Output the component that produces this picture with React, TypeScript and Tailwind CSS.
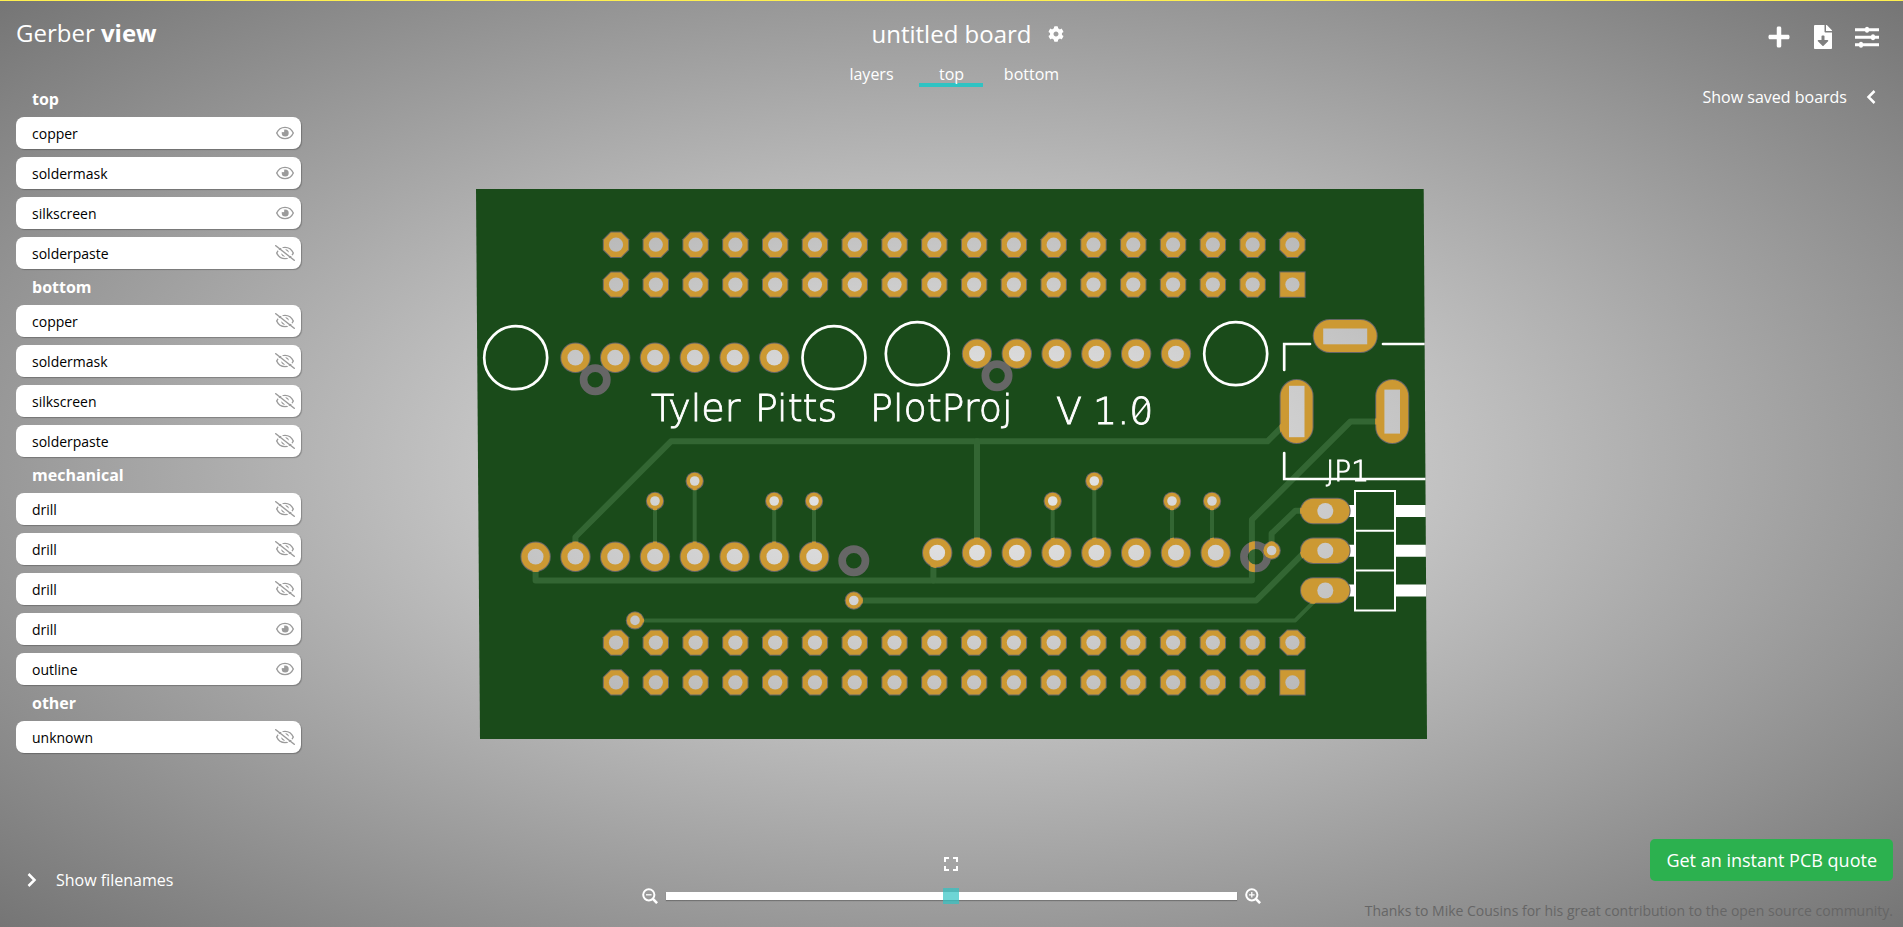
import { useState } from "react";
import { FaCog, FaFileDownload, FaPlus } from "react-icons/fa";

type Layer = { name: string; visible: boolean };
type LayerGroup = { title: string; layers: Layer[] };

const initialGroups: LayerGroup[] = [
  {
    title: "top",
    layers: [
      { name: "copper", visible: true },
      { name: "soldermask", visible: true },
      { name: "silkscreen", visible: true },
      { name: "solderpaste", visible: false },
    ],
  },
  {
    title: "bottom",
    layers: [
      { name: "copper", visible: false },
      { name: "soldermask", visible: false },
      { name: "silkscreen", visible: false },
      { name: "solderpaste", visible: false },
    ],
  },
  {
    title: "mechanical",
    layers: [
      { name: "drill", visible: false },
      { name: "drill", visible: false },
      { name: "drill", visible: false },
      { name: "drill", visible: true },
      { name: "outline", visible: true },
    ],
  },
  { title: "other", layers: [{ name: "unknown", visible: false }] },
];

/* ---------- icons ---------- */

function EyeIcon({ open }: { open: boolean }) {
  return (
    <svg viewBox="0 0 20 16" className="h-4 w-5" fill="none" stroke="#9b9b9b" aria-hidden="true">
      <path
        d="M1.700 8C3.300 4.400 6.300 2.400 10 2.400s6.700 2 8.300 5.600c-1.600 3.600-4.600 5.600-8.300 5.600S3.300 11.600 1.700 8z"
        strokeWidth="1.400"
      />
      {open ? (
        <>
          <circle cx="10.200" cy="8" r="3.500" fill="#9b9b9b" stroke="none" />
          <circle cx="8" cy="5.900" r="1.300" fill="#fff" stroke="none" />
        </>
      ) : (
        <>
          <path d="M6.800 8.300a3.200 3.200 0 0 0 3 2.900M10.400 4.900a3.200 3.200 0 0 1 2.900 2.900" strokeWidth="1.300" />
          <path d="M1.600 -1.200L21 14.200M-1 1.600L18.400 17" stroke="#fff" strokeWidth="1.500" />
          <path d="M0.200 0.300L19.800 15.700" strokeWidth="1.400" />
        </>
      )}
    </svg>
  );
}

function SlidersIcon() {
  return (
    <svg viewBox="0 0 24 24" className="size-6" fill="currentColor" aria-hidden="true">
      <path d="M0 3.200h24v3H0zM0 10.700h24v3H0zM0 18.200h24v3H0z" />
      <rect x="10" y="1.700" width="4" height="6" rx="2" />
      <rect x="16" y="9.200" width="4" height="6" rx="2" />
      <rect x="4" y="16.700" width="4" height="6" rx="2" />
    </svg>
  );
}

function Chevron({ left = false }: { left?: boolean }) {
  return (
    <svg viewBox="0 0 10 14" className="h-3.5 w-2.5" fill="none" stroke="currentColor" strokeWidth="2.500" aria-hidden="true">
      <path d={left ? "M8.500 1L2.500 7l6 6" : "M1.500 1l6 6-6 6"} />
    </svg>
  );
}

function Magnifier({ plus = false }: { plus?: boolean }) {
  return (
    <svg viewBox="0 0 16 16" className="size-4 shrink-0" fill="none" stroke="currentColor" aria-hidden="true">
      <circle cx="6.800" cy="6.800" r="5.600" strokeWidth="2" />
      <path d="M10.900 10.900l4.200 4.300" strokeWidth="2.600" />
      <path d={plus ? "M4 6.800h5.600M6.800 4v5.600" : "M4 6.800h5.600"} strokeWidth="1.300" />
    </svg>
  );
}

function FitIcon() {
  return (
    <svg viewBox="0 0 14 14" className="size-3.5" fill="none" stroke="currentColor" strokeWidth="2" aria-hidden="true">
      <path d="M1 5V1h4M9 1h4v4M13 9v4H9M5 13H1V9" />
    </svg>
  );
}

/* ---------- board drawing ---------- */

const PITCH = 39.79;
const run = (x: number, y: number, n: number) =>
  Array.from({ length: n }, (_, i) => [x + i * PITCH, y] as const);

const headerRows = [
  { y: 244.7, square: false },
  { y: 284.6, square: true },
  { y: 642.6, square: false },
  { y: 682.4, square: true },
];
const headerPins = headerRows.flatMap((row) =>
  run(616, row.y, 18).map(([x, y], i) => ({ x, y, square: row.square && i === 17 })),
);
const roundPads = [
  ...run(575.4, 357.7, 6),
  ...run(977, 353.7, 6),
  ...run(535.6, 556.7, 8),
  ...run(937.2, 552.7, 8),
];
const vias = [
  [655, 501], [694.7, 481], [774.2, 501], [814, 501],
  [1052.7, 501], [1094.3, 481], [1172, 501], [1212, 501],
  [1271.6, 550.5], [853.8, 600.5], [635, 620.4],
];
const fiducials = [
  [595.2, 379.7], [997, 375.7], [853.8, 560.7], [1255.6, 556.7],
];
const jackPads = [
  { x: 1345.2, y: 336, w: 65, h: 34, hole: [1323.2, 328.5, 44, 15.8] },
  { x: 1296.6, y: 411.5, w: 34, h: 65, hole: [1289, 385.8, 15.5, 51.4] },
  { x: 1392.2, y: 411.5, w: 34, h: 65, hole: [1384.4, 389.6, 15.6, 44] },
];
const jumperYs = [511, 550.7, 590.5];
const silkCircles = [
  [515.7, 357.7], [834, 357.7], [917.3, 353.7], [1235.7, 353.7],
];

function Octagon({ x, y, r }: { x: number; y: number; r: number }) {
  const k = r * 0.414;
  const points = [
    [-k, -r], [k, -r], [r, -k], [r, k], [k, r], [-k, r], [-r, k], [-r, -k],
  ].map(([dx, dy]) => `${x + dx},${y + dy}`);
  return <polygon points={points.join(" ")} />;
}

function Pads({ grow }: { grow: number }) {
  return (
    <>
      {headerPins.map((p) =>
        p.square ? (
          <rect
            key={`${p.x}-${p.y}`}
            x={p.x - 12.2 - grow}
            y={p.y - 12.2 - grow}
            width={24.4 + 2 * grow}
            height={24.4 + 2 * grow}
          />
        ) : (
          <Octagon key={`${p.x}-${p.y}`} x={p.x} y={p.y} r={12.2 + grow} />
        ),
      )}
      {roundPads.map(([x, y]) => (
        <circle key={`${x}-${y}`} cx={x} cy={y} r={14.2 + grow} />
      ))}
      {vias.map(([x, y]) => (
        <circle key={`${x}-${y}`} cx={x} cy={y} r={8.2 + grow} />
      ))}
      {jackPads.map((p) => (
        <rect
          key={`${p.x}-${p.y}`}
          x={p.x - p.w / 2 + 1 - grow}
          y={p.y - p.h / 2 + 1 - grow}
          width={p.w - 2 + 2 * grow}
          height={p.h - 2 + 2 * grow}
          rx={16 + grow}
        />
      ))}
      {jumperYs.map((y) => (
        <rect key={y} x={1301 - grow} y={y - 12.2 - grow} width={48.6 + 2 * grow} height={24.4 + 2 * grow} rx={12.2 + grow} />
      ))}
    </>
  );
}

function Traces({ color }: { color: string }) {
  return (
    <g fill="none" stroke={color} strokeLinejoin="round" strokeLinecap="round">
      <g strokeWidth="6">
        <path d="M575.400 556.700V537L671 441.300H1267.500L1297 412" />
        <path d="M977 441.300V552" />
        <path d="M535.600 556.700V580.500H1251.900V519.700L1350.500 421.500H1392" />
        <path d="M933.400 553V580.500" />
        <path d="M853.800 600.500H1256.200L1306 550.700" />
        <path d="M1271.600 550.500V533.500L1295.200 510.800H1325" />
      </g>
      <g strokeWidth="4">
        <path d="M655 501V556M694.700 481V556M774.200 501V556M814 501V556" />
        <path d="M1052.700 501V552M1094.300 481V552M1172 501V552M1212 501V552" />
        <path d="M635 620.400H1295.300L1325 590.500" />
      </g>
    </g>
  );
}

function Board() {
  const outline = "476,189 1423.700,189 1427,739 480,739";
  return (
    <svg
      viewBox="0 0 1903 927"
      className="absolute inset-0 h-full w-full"
      role="img"
      aria-label="Top side of the board"
    >
      <defs>
        <clipPath id="edge">
          <polygon points={outline} />
        </clipPath>
        <clipPath id="openings">
          <Pads grow={1} />
          {fiducials.map(([x, y]) => (
            <path
              key={x}
              clipRule="evenodd"
              d={`M${x - 15.5} ${y}a15.500 15.500 0 1 0 31 0a15.500 15.500 0 1 0 -31 0zM${x - 7.8} ${y}a7.800 7.800 0 1 0 15.600 0a7.800 7.800 0 1 0 -15.600 0z`}
            />
          ))}
        </clipPath>
        <mask id="drills" maskUnits="userSpaceOnUse" x="0" y="0" width="1903" height="927">
          <rect width="1903" height="927" fill="#fff" />
          {headerPins.map((p) => (
            <circle key={`${p.x}-${p.y}`} cx={p.x} cy={p.y} r="7.100" />
          ))}
          {roundPads.map(([x, y]) => (
            <circle key={`${x}-${y}`} cx={x} cy={y} r="7.900" />
          ))}
          {vias.map(([x, y]) => (
            <circle key={`${x}-${y}`} cx={x} cy={y} r="4.800" />
          ))}
          {jumperYs.map((y) => (
            <circle key={y} cx="1325.300" cy={y} r="8" />
          ))}
          {jackPads.map((p) => (
            <rect key={p.x} x={p.hole[0]} y={p.hole[1]} width={p.hole[2]} height={p.hole[3]} />
          ))}
        </mask>
      </defs>
      <g mask="url(#drills)">
        <g clipPath="url(#edge)">
          <rect x="470" y="180" width="965" height="565" fill="#1a4b1a" />
          <Traces color="#336633" />

          <g fill="none" stroke="#fff" strokeWidth="2.700" strokeLinecap="round">
            {silkCircles.map(([x, y]) => (
              <circle key={x} cx={x} cy={y} r="31.500" />
            ))}
            <path d="M1284.200 370V344H1310M1383 344H1430M1284.200 453V479H1430" />
          </g>
          <g fill="none" stroke="#fff" strokeWidth="2">
            <path d="M1355 491H1395V610.500H1355zM1355 530.700H1395M1355 570.500H1395" />
          </g>
          <g stroke="#fff" strokeWidth="12">
            {jumperYs.map((y) => (
              <path key={y} d={`M1340 ${y}H1355M1395 ${y}H1430`} />
            ))}
          </g>
          <g
            fill="#fff"
            stroke="#fff"
            strokeWidth="0.800"
            fontFamily="'DejaVu Sans', sans-serif"
            fontWeight="200"
            fontSize="38"
          >
            <text x="651" y="421">Tyler</text>
            <text x="755" y="421">Pitts</text>
            <text x="870" y="421">PlotProj</text>
            <text x="1056" y="424">V</text>
            <text x="1093" y="424">1.0</text>
            <text x="1326" y="481" fontSize="28">JP1</text>
          </g>
          <path d="M1135 418L1147 403" stroke="#fff" strokeWidth="2" />

          <g fill="#666">
            <Pads grow={1} />
          </g>
          <g fill="none" stroke="#666" strokeWidth="7.700">
            {fiducials.map(([x, y]) => (
              <circle key={x} cx={x} cy={y} r="11.650" />
            ))}
          </g>
          <g clipPath="url(#openings)">
            <g fill="#cc9933">
              <Pads grow={0} />
            </g>
            <Traces color="#cc9933" />
          </g>
        </g>
      </g>
    </svg>
  );
}

/* ---------- page ---------- */

const views = ["layers", "top", "bottom"];

export default function App() {
  const [groups, setGroups] = useState(initialGroups);
  const [view, setView] = useState("top");

  const toggle = (g: number, l: number) =>
    setGroups((prev) =>
      prev.map((group, gi) =>
        gi !== g
          ? group
          : {
              ...group,
              layers: group.layers.map((layer, li) =>
                li === l ? { ...layer, visible: !layer.visible } : layer,
              ),
            },
      ),
    );

  return (
    <div className="relative h-screen min-h-[820px] overflow-hidden bg-[radial-gradient(ellipse_at_center,#eeeeee_0%,#757575_100%)] font-['Open_Sans',sans-serif] text-base text-white">
      <Board />
      <div className="absolute inset-x-0 top-0 h-px bg-[#fff04f]" />
      <div className="relative grid h-full grid-cols-[1fr_auto_1fr]">
        <aside className="flex flex-col items-start pb-[31px]">
          <h1 className="px-4 pt-[17px] text-2xl leading-8">
            Gerber <b>view</b>
          </h1>
          <div className="mt-8 ml-4 w-[285px]">
            {groups.map((group, gi) => (
              <section key={group.title}>
                <h2 className="flex h-9 items-center px-4 font-bold">{group.title}</h2>
                <ul className="flex flex-col gap-2">
                  {group.layers.map((layer, li) => (
                    <li
                      key={li}
                      className="flex h-8 items-center justify-between rounded-lg bg-white pr-1.5 pl-4 text-sm text-black shadow-[1px_1px_1px_rgba(0,0,0,0.25)]"
                    >
                      <span className="pt-px">{layer.name}</span>
                      <button
                        type="button"
                        aria-label={`Toggle ${group.title} ${layer.name}`}
                        aria-pressed={layer.visible}
                        onClick={() => toggle(gi, li)}
                      >
                        <EyeIcon open={layer.visible} />
                      </button>
                    </li>
                  ))}
                </ul>
              </section>
            ))}
          </div>
          <button type="button" className="mt-auto flex items-center gap-[19px] pl-[27px] leading-8">
            <Chevron />
            Show filenames
          </button>
        </aside>

        <main className="flex flex-col items-center pb-[23px]">
          <div className="flex items-center gap-4 pt-[18px] pl-8">
            <h2 className="text-2xl leading-8">untitled board</h2>
            <button type="button" aria-label="Board settings">
              <FaCog className="size-4" />
            </button>
          </div>
          <nav className="mt-[15px] flex gap-4">
            {views.map((name) => (
              <button
                key={name}
                type="button"
                onClick={() => setView(name)}
                className={
                  name === view
                    ? "flex w-16 justify-center border-b-4 border-[#30c3c3] leading-[18px]"
                    : "flex w-16 justify-center border-b-4 border-transparent leading-[18px]"
                }
              >
                {name}
              </button>
            ))}
          </nav>

          <button type="button" aria-label="Fit board to window" className="mt-auto mb-[17px]">
            <FitIcon />
          </button>
          <div className="flex items-center gap-2">
            <button type="button" aria-label="Zoom out">
              <Magnifier />
            </button>
            <input
              type="range"
              aria-label="Zoom"
              defaultValue={50}
              className="h-4 w-[30vw] appearance-none bg-transparent [&::-webkit-slider-runnable-track]:h-2 [&::-webkit-slider-runnable-track]:bg-white [&::-webkit-slider-runnable-track]:shadow-[0_1px_1px_rgba(0,0,0,0.25)] [&::-webkit-slider-thumb]:-mt-1 [&::-webkit-slider-thumb]:size-4 [&::-webkit-slider-thumb]:appearance-none [&::-webkit-slider-thumb]:bg-[#30c3c3]/70"
            />
            <button type="button" aria-label="Zoom in">
              <Magnifier plus />
            </button>
          </div>
        </main>

        <aside className="flex flex-col items-end">
          <div className="flex items-center gap-[23px] pt-[25px] pr-6">
            <button type="button" aria-label="Add board">
              <FaPlus className="size-6" />
            </button>
            <button type="button" aria-label="Download board">
              <FaFileDownload className="h-6 w-[18px]" />
            </button>
            <button type="button" aria-label="Options">
              <SlidersIcon />
            </button>
          </div>
          <button type="button" className="mt-8 flex items-center gap-[19px] pr-[27px] leading-8">
            Show saved boards
            <Chevron left />
          </button>
          <a
            href="#quote"
            className="mt-auto mr-[10px] rounded-[5px] bg-[#2cb14f] px-4 text-lg leading-[42px] text-white"
          >
            Get an instant PCB quote
          </a>
          <p className="mt-[18px] mr-[10px] mb-1 text-sm leading-6 text-[#666]">
            Thanks to Mike Cousins for his great contribution to the open source community.
          </p>
        </aside>
      </div>
    </div>
  );
}
